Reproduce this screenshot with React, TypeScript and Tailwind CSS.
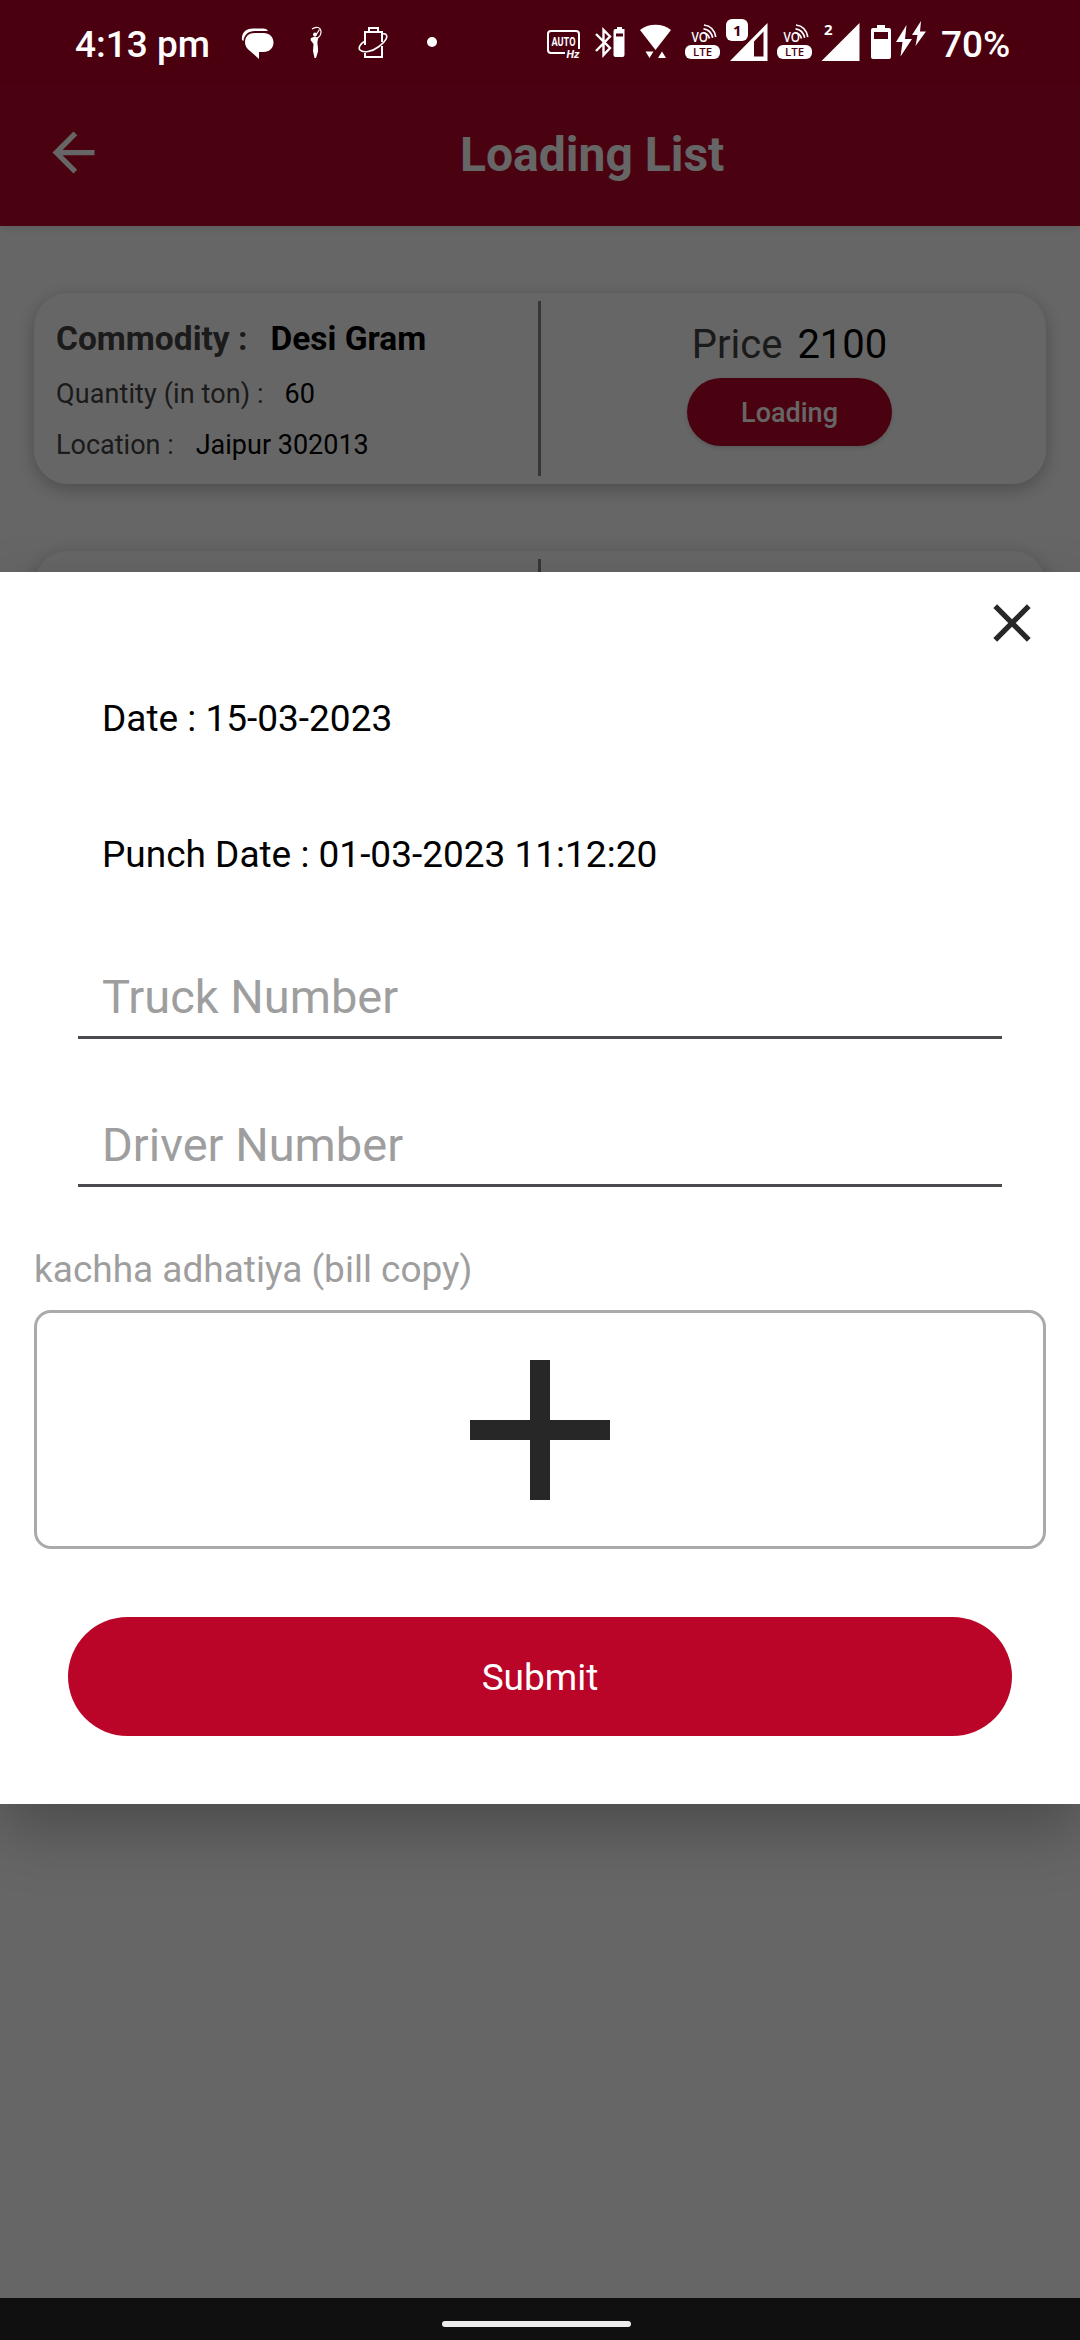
import type { ReactNode } from 'react';

interface IconProps {
    width: number;
    className?: string;
    children: ReactNode;
}

interface Listing {
    commodity: string;
    quantity: string;
    location: string;
    price: string;
}

const listing: Listing = { commodity: 'Desi Gram', quantity: '60', location: 'Jaipur 302013', price: '2100' };

// All status bar icons share the same 44px tall box
function StatusIcon({ width, className = '', children }: IconProps) {
    return (
        <svg width={width} height="44" viewBox={`0 0 ${width} 44`} fill="white" className={`shrink-0 ${className}`}>
            {children}
        </svg>
    );
}

function VoLte({ className }: { className: string }) {
    return (
        <StatusIcon width={37} className={className}>
            <g fill="none" stroke="white" strokeWidth="1.700">
                <path d="M19 14.500c3 .5 5.500 2.500 6.500 6" />
                <path d="M19.500 10.800c4.500.5 8 3.700 9.200 9" />
                <path d="M20 7c6 .7 10.500 5 11.800 12" />
            </g>
            <text x="7.500" y="24" fontSize="13.500" fontWeight="600" textLength="16.500" lengthAdjust="spacingAndGlyphs" className="font-['Open_Sans',sans-serif]">VO</text>
            <rect x="1" y="27" width="35" height="14" rx="6" />
            <text x="9" y="38" fontSize="11.500" fontWeight="600" fill="#4b0010" textLength="19" lengthAdjust="spacingAndGlyphs" className="font-['Open_Sans',sans-serif]">LTE</text>
        </StatusIcon>
    );
}

function StatusBar() {
    return (
        <div className="flex h-[84px] shrink-0 items-start bg-[#4b0010] pt-[18px] pl-[75px] text-[37px] leading-[54px] font-medium text-white">
            <span className="w-[135px] whitespace-nowrap">4:13 pm</span>
            {/* Chat */}
            <StatusIcon width={34} className="ml-[31px]">
                <path d="M1 22C0 14 6 10.500 12 10.500h10c2.500 0 4 .8 5 2.500H14C7 13 3 17 2.500 23z" />
                <path d="M14 15h8.500c6 0 10 4 10 9.500S28.500 34 22.500 34H18v7L9 33c-3-2-5-5-5-8.500C4 18 8 15 14 15z" />
            </StatusIcon>
            {/* Figure */}
            <StatusIcon width={16} className="ml-[33px]">
                <path d="M4 11c4-3 9-2 9 3 0 4-2 5.500-5 7M11.500 11.500L8 17" fill="none" stroke="white" strokeWidth="1.200" />
                <circle cx="7" cy="16.500" r="2" />
                <path d="M3 20l4-1.500 2 1 1.500-1-1 5c-.5 3 1 6 .5 10l-2 6.500H6.500L5 33l.5-7-3-4z" />
            </StatusIcon>
            {/* Battery with orbit */}
            <StatusIcon width={32} className="ml-[34px]">
                <g fill="none" stroke="white" strokeWidth="2">
                    <path d="M7 27V14h4v-4h9v4h4v10M24 28v11H7v-4M12 14h8" />
                    <path d="M7 23c-5 3-7 7-5 9 3 3 12 2 19-3.500 7-5 9-10 7-12-.8-1-2-1-4-.5" strokeWidth="1.600" />
                </g>
            </StatusIcon>
            <StatusIcon width={10} className="ml-[37px]">
                <circle cx="5" cy="24" r="5" />
            </StatusIcon>

            {/* Auto refresh rate */}
            <StatusIcon width={36} className="ml-[109px]">
                <path d="M19 35H5a3 3 0 0 1-3-3V16a3 3 0 0 1 3-3h25a3 3 0 0 1 3 3v15" fill="none" stroke="white" strokeWidth="2" />
                <text x="5.500" y="28" fontSize="12" fontWeight="700" textLength="24" lengthAdjust="spacingAndGlyphs">AUTO</text>
                <text x="20.500" y="40" fontSize="10.500" fontWeight="700" fontStyle="italic" textLength="13" lengthAdjust="spacingAndGlyphs">Hz</text>
            </StatusIcon>
            {/* Bluetooth with battery */}
            <StatusIcon width={32} className="ml-[12px]">
                <path d="M2 16l14 14-6.500 7V12L16 18.500 2 33" fill="none" stroke="white" strokeWidth="2.400" />
                <path d="M23 9h5v2h2.500v26a2 2 0 0 1-2 2h-7a2 2 0 0 1-2-2V13a2 2 0 0 1 2-2H23zM22 15.500v3h7v-3z" fillRule="evenodd" />
            </StatusIcon>
            {/* Wifi */}
            <StatusIcon width={33} className="ml-[13px]">
                <path d="M16.500 32L1 12C9 5 24 5 32 12z" />
                <path d="M6.500 33.500h8l-4 6.500zM19 40h8l-4-6.500z" />
            </StatusIcon>
            <VoLte className="ml-[12px]" />
            {/* Sim 1 signal */}
            <StatusIcon width={43} className="ml-[4px]">
                <path d="M5 43L42.500 5v38zM29 23.500V38.500h9.500v-25z" fillRule="evenodd" />
                <rect x="0" y="0" width="24" height="24" rx="6" fill="#4b0010" />
                <rect x="1" y="1" width="22" height="22" rx="6" />
                <text x="8" y="17.500" fontSize="15" fontWeight="700" fill="#4b0010" className="font-['Noto_Sans',sans-serif]">1</text>
            </StatusIcon>
            <VoLte className="ml-[8px]" />
            {/* Sim 2 signal */}
            <StatusIcon width={41} className="ml-[7px]">
                <path d="M1.500 43L39.500 5v38z" />
                <text x="4" y="17" fontSize="15" fontWeight="700" className="font-['Noto_Sans',sans-serif]">2</text>
            </StatusIcon>
            {/* Battery */}
            <StatusIcon width={22} className="ml-[9px]">
                <path d="M7 7h8v3h4a2 2 0 0 1 2 2v27a2 2 0 0 1-2 2H3a2 2 0 0 1-2-2V12a2 2 0 0 1 2-2h4zM4 14v7h14v-7z" fillRule="evenodd" />
            </StatusIcon>
            <StatusIcon width={31} className="ml-[3px]">
                <path d="M11.500 7L1 24h6.500l-2 14.500L17 21h-7z" />
                <path d="M26 3L17 17h5.500l-2 11L31 13.500h-6z" />
            </StatusIcon>
            <span className="ml-[15px]">70%</span>
        </div>
    );
}

function ListingCard({ listing }: { listing?: Listing }) {
    return (
        <div className="flex h-[191px] shrink-0 rounded-[34px] bg-white shadow-[0_5px_18px_rgba(0,0,0,0.26)]">
            <div className="flex w-[504px] flex-col pt-[17px] pl-[22px] text-[27px] text-[#444]">
                {listing && (
                    <>
                        <div className="flex h-[59px] items-center text-[33.5px] font-bold">
                            <span>Commodity :</span>
                            <span className="ml-[23px] text-black">{listing.commodity}</span>
                        </div>
                        <div className="flex h-[51px] items-center">
                            <span className="tracking-[0.1px]">Quantity (in ton) :</span>
                            <span className="ml-[21px] text-black">{listing.quantity}</span>
                        </div>
                        <div className="flex h-[51px] items-center">
                            <span>Location :</span>
                            <span className="ml-[22px] text-black">{listing.location}</span>
                        </div>
                    </>
                )}
            </div>
            <div className="my-[8px] w-[3px] bg-[#888]" />
            <div className="flex flex-1 flex-col items-center pt-[24px] pr-[8px]">
                {listing && (
                    <>
                        <div className="flex h-[55px] items-center text-[40px] text-[#444]">
                            <span>Price</span>
                            <span className="ml-[15px] text-black">{listing.price}</span>
                        </div>
                        <button className="mt-[6px] h-[68px] w-[205px] rounded-full bg-[#bb0528] pt-[2px] text-[27px] font-medium text-white shadow-[0_2px_4px_rgba(0,0,0,0.15)]">
                            Loading
                        </button>
                    </>
                )}
            </div>
        </div>
    );
}

function LoadingListScreen() {
    return (
        <div className="flex h-full flex-col overflow-hidden bg-white">
            <div className="flex h-[142px] shrink-0 items-center bg-[#bb0528] shadow-[0_2px_8px_rgba(0,0,0,0.12)]">
                <svg width="63" height="63" viewBox="0 0 24 24" fill="white" className="ml-[42px] -mt-[5px]">
                    <path d="M20 11H7.830l5.590-5.590L12 4l-8 8 8 8 1.410-1.410L7.830 13H20v-2z" />
                </svg>
                <h1 className="ml-[355px] text-[48px] font-bold text-white">Loading List</h1>
            </div>
            <div className="flex flex-col gap-[67px] px-[34px] pt-[67px]">
                <ListingCard listing={listing} />
                <ListingCard />
            </div>
        </div>
    );
}

function TruckDialog() {
    return (
        <div className="absolute top-[488px] left-0 flex h-[1232px] w-full flex-col bg-white text-[37px] text-black shadow-[0_26px_56px_rgba(0,0,0,0.26)]">
            <button className="mt-[19px] mr-[36px] self-end">
                <svg width="64" height="64" viewBox="0 0 24 24" fill="#272727">
                    <path d="M19 6.410L17.590 5 12 10.590 6.410 5 5 6.410 10.590 12 5 17.590 6.410 19 12 13.410 17.590 19 19 17.590 13.410 12z" />
                </svg>
            </button>
            <p className="mt-[34px] ml-[102px] leading-[60px]">Date : 15-03-2023</p>
            <p className="mt-[76px] ml-[102px] leading-[60px]">Punch Date : 01-03-2023 11:12:20</p>
            <div className="mx-[78px] mt-[69px] flex h-[85px] items-center border-b-[3px] border-[#4a4b4e] pt-[4px] pl-[24px] text-[47px] text-[#9e9e9e]">
                Truck Number
            </div>
            <div className="mx-[78px] mt-[63px] flex h-[85px] items-center border-b-[3px] border-[#4a4b4e] pt-[4px] pl-[24px] text-[47px] text-[#9e9e9e]">
                Driver Number
            </div>
            <p className="mt-[53px] ml-[34px] leading-[60px] text-[#9e9e9e]">kachha adhatiya (bill copy)</p>
            <div className="mx-[34px] mt-[10px] flex h-[239px] items-center justify-center rounded-[17px] border-[3px] border-[#aaa]">
                <svg width="140" height="140" viewBox="0 0 14 14" fill="#272727">
                    <path d="M14 8H8v6H6V8H0V6h6V0h2v6h6v2z" />
                </svg>
            </div>
            <button className="mx-[68px] mt-[68px] h-[119px] rounded-full bg-[#bb0528] pt-[3px] text-white">Submit</button>
        </div>
    );
}

export default function App() {
    return (
        <div className="flex h-[2340px] w-[1080px] flex-col overflow-hidden font-[Roboto,sans-serif]">
            <StatusBar />
            <div className="relative flex-1 overflow-hidden">
                <LoadingListScreen />
                <div className="absolute inset-0 bg-black/60" />
                <TruckDialog />
            </div>
            {/* Gesture bar */}
            <div className="flex h-[42px] shrink-0 justify-center bg-[#101010] pt-[23px]">
                <div className="mr-[7px] h-[6px] w-[189px] rounded-full bg-[#ececec]" />
            </div>
        </div>
    );
}
